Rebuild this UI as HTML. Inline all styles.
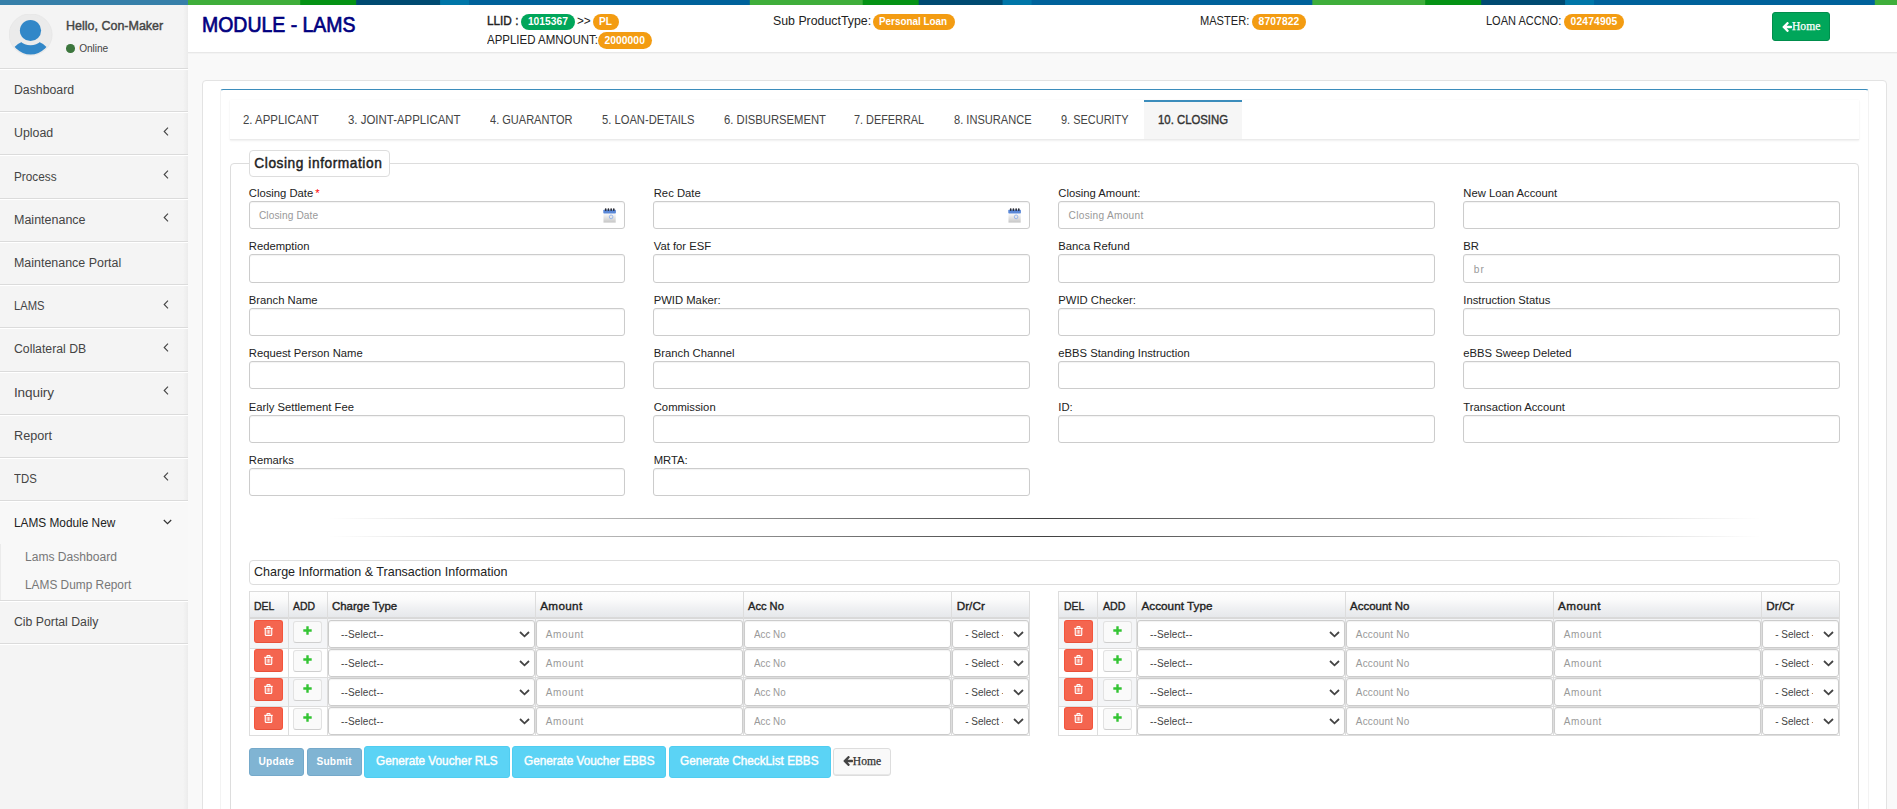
<!DOCTYPE html>
<html lang="en"><head><meta charset="utf-8"><title>MODULE - LAMS</title>
<style>
*{box-sizing:border-box;margin:0;padding:0}
html,body{width:1897px;height:809px;overflow:hidden;background:#f9f9f9;font-family:"Liberation Sans",sans-serif;color:#444}
div,span,aside,header,main,nav,section,ul,li,a,i,b,label,button,input,svg,table,fieldset,legend,hr{position:absolute;display:block}
button,input{font:inherit;outline:0;padding:0;margin:0;-webkit-appearance:none;appearance:none}
.t{white-space:nowrap;line-height:normal;color:#444;transform-origin:0 0}
b{font-weight:400}
a{color:inherit;text-decoration:none}
#stripe{left:0;top:0;width:1897px;height:5px;background:#367fa9}
#stripe i{left:188px;top:0;width:1709px;height:5px;background:linear-gradient(90deg,#3fae3b 0,#3fae3b 20%,#059214 20%,#059214 30%,#004a71 30%,#004a71 45%,#0076a8 45%,#0076a8 50%,#00629b 50%,#00629b 100%);background-size:562.5px 5px;background-position:-0.7px 0}
#side{left:0;top:5px;width:188px;height:804px;background:#f4f4f4}
#side .edge{left:183px;top:0;width:5px;height:804px;background:linear-gradient(90deg,rgba(0,0,0,0),rgba(0,0,0,.035))}
#side .sep{left:0;width:188px;height:2px;border-top:1px solid #dbdbdb;background:#fff}
#side .open{left:0;width:188px;background:#f8f8f8}
#top{left:188px;top:5px;width:1709px;height:47px;background:#fff;box-shadow:0 1px 0 #e8e8e8,0 2px 0 #f3f3f3}
.badge{border-radius:9px;background:#f39c12}
.badge.g{background:#00a65a}
.card{left:202px;top:80px;width:1685px;height:760px;background:#fff;border:1px solid #e3e3e3;border-radius:4px}
.boxp{left:220px;top:89px;width:1649px;height:760px;background:#fff;border-top:1px solid #3c8dbc;border-left:1px solid #f3f3f3;border-right:1px solid #f3f3f3;border-radius:3px 3px 0 0}
.tabs{left:230px;top:100px;width:1629px;height:40px;background:#fff;border-bottom:1px solid #ebebeb;box-shadow:0 1px 2px rgba(0,0,0,.06), 0 0 1px rgba(0,0,0,.06)}
.tabs .act{left:914px;top:0;width:98px;height:39px;background:#f6f6f6;border-top:2px solid #3c8dbc}
.fs{left:230px;top:163px;width:1629px;height:700px;border:1px solid #ddd;border-radius:4px}
.lg{left:249px;top:150px;width:141px;height:27px;background:#fff;border:1px solid #ddd;border-radius:4px}
.in{background:#fff;border:1px solid #ccc;border-radius:3px;box-shadow:inset 0 1px 1px rgba(0,0,0,.05)}
.hr{left:328px;width:1433px;height:1px;background:linear-gradient(90deg,rgba(0,0,0,0),rgba(0,0,0,.75),rgba(0,0,0,0))}
.ttl{left:249px;top:560px;width:1591px;height:25px;border:1px solid #ddd;border-radius:4px;background:#fff}
.tb{border:1px solid #ddd;background:#fff}
.th{background:linear-gradient(#fefefe 0,#fbfbfb 30%,#f0f1f3 62%,#e6e8eb 100%);border-bottom:2px solid #d9d9d9}
.vl{width:1px;background:#ddd}
.hl{height:1px;background:#ddd}
.odd{background:#f4f5f7}
.del{background:#f4654f;border:1px solid #f4543c;border-bottom-color:#e8513a;border-radius:3px}
.addb{background:#fafafa;border:1px solid #e2e2e2;border-bottom-color:#cfcfcf;border-radius:3px}
.btn{border-radius:3px}
.hs{-webkit-text-stroke:0.25px}
</style></head>
<body>
<div id="stripe"><i></i></div>
<aside id="side"><div class="edge"></div><svg style="left:9px;top:9px;width:44px;height:42px" viewBox="0 0 44 42"><defs><clipPath id="cp"><ellipse cx="21.6" cy="20.6" rx="20.4" ry="19.8"/></clipPath></defs><ellipse cx="21.6" cy="20.6" rx="21.5" ry="20.8" fill="#ebebeb" stroke="#e2e2e2" stroke-width="0.6"/><g clip-path="url(#cp)"><circle cx="21.5" cy="48" r="21.8" fill="#3187c8"/></g><circle cx="21.5" cy="16.5" r="14.7" fill="#ebebeb"/><circle cx="21.5" cy="16.5" r="10.6" fill="#3187c8"/></svg><span class="t" style="left:65.59px;top:13.00px;font-size:12.8px;transform:scaleX(0.9764);-webkit-text-stroke:0.41px;">Hello, Con-Maker</span><i style="left:66px;top:39px;width:8.6px;height:8.6px;border-radius:50%;background:#3c763d"></i><span class="t" style="left:79.19px;top:37.60px;font-size:10.152px;letter-spacing:-0.076px;">Online</span><div class="open" style="top:497px;height:98px"></div><div style="left:0;top:539px;width:1px;height:56px;background:#ebebeb"></div><div class="sep" style="top:63px"></div><div class="sep" style="top:106px"></div><div class="sep" style="top:149px"></div><div class="sep" style="top:193px"></div><div class="sep" style="top:236px"></div><div class="sep" style="top:279px"></div><div class="sep" style="top:322px"></div><div class="sep" style="top:366px"></div><div class="sep" style="top:409px"></div><div class="sep" style="top:452px"></div><div class="sep" style="top:495px"></div><div class="sep" style="top:595px"></div><div class="sep" style="top:638px"></div><a><span class="t" style="left:13.96px;top:77.10px;font-size:13.536px;transform:scaleX(0.9086);">Dashboard</span></a><a><span class="t" style="left:13.96px;top:120.30px;font-size:13.536px;transform:scaleX(0.9146);">Upload</span></a><svg style="left:163px;top:121.8px;width:6px;height:9px" viewBox="0 0 6 9"><path d="M5 0.7 L1.2 4.5 L5 8.3" fill="none" stroke="#444" stroke-width="1.1"/></svg><a><span class="t" style="left:13.96px;top:163.50px;font-size:13.536px;transform:scaleX(0.8721);">Process</span></a><svg style="left:163px;top:165px;width:6px;height:9px" viewBox="0 0 6 9"><path d="M5 0.7 L1.2 4.5 L5 8.3" fill="none" stroke="#444" stroke-width="1.1"/></svg><a><span class="t" style="left:13.96px;top:206.70px;font-size:13.536px;transform:scaleX(0.9248);">Maintenance</span></a><svg style="left:163px;top:208.2px;width:6px;height:9px" viewBox="0 0 6 9"><path d="M5 0.7 L1.2 4.5 L5 8.3" fill="none" stroke="#444" stroke-width="1.1"/></svg><a><span class="t" style="left:13.96px;top:249.90px;font-size:13.536px;transform:scaleX(0.9203);">Maintenance Portal</span></a><a><span class="t" style="left:13.96px;top:293.10px;font-size:13.536px;transform:scaleX(0.8308);">LAMS</span></a><svg style="left:163px;top:294.6px;width:6px;height:9px" viewBox="0 0 6 9"><path d="M5 0.7 L1.2 4.5 L5 8.3" fill="none" stroke="#444" stroke-width="1.1"/></svg><a><span class="t" style="left:13.96px;top:336.30px;font-size:13.536px;transform:scaleX(0.9065);">Collateral DB</span></a><svg style="left:163px;top:337.8px;width:6px;height:9px" viewBox="0 0 6 9"><path d="M5 0.7 L1.2 4.5 L5 8.3" fill="none" stroke="#444" stroke-width="1.1"/></svg><a><span class="t" style="left:13.96px;top:379.50px;font-size:13.536px;letter-spacing:-0.092px;">Inquiry</span></a><svg style="left:163px;top:381px;width:6px;height:9px" viewBox="0 0 6 9"><path d="M5 0.7 L1.2 4.5 L5 8.3" fill="none" stroke="#444" stroke-width="1.1"/></svg><a><span class="t" style="left:13.96px;top:422.70px;font-size:13.536px;transform:scaleX(0.9360);">Report</span></a><a><span class="t" style="left:13.96px;top:465.90px;font-size:13.536px;transform:scaleX(0.8423);">TDS</span></a><svg style="left:163px;top:467.4px;width:6px;height:9px" viewBox="0 0 6 9"><path d="M5 0.7 L1.2 4.5 L5 8.3" fill="none" stroke="#444" stroke-width="1.1"/></svg><a><span class="t" style="left:13.76px;top:510.20px;font-size:13.536px;transform:scaleX(0.8755);color:#222;">LAMS Module New</span></a><svg style="left:163px;top:513.6px;width:9px;height:6px" viewBox="0 0 9 6"><path d="M0.8 1 L4.5 4.7 L8.2 1" fill="none" stroke="#333" stroke-width="1.2"/></svg><a><span class="t" style="left:24.66px;top:544.00px;font-size:13.536px;transform:scaleX(0.8926);color:#777;">Lams Dashboard</span></a><a><span class="t" style="left:24.66px;top:571.70px;font-size:13.536px;transform:scaleX(0.8780);color:#777;">LAMS Dump Report</span></a><a><span class="t" style="left:13.76px;top:608.50px;font-size:13.536px;transform:scaleX(0.9070);">Cib Portal Daily</span></a></aside>
<header id="top"><span class="t" style="left:14.23px;top:6.85px;font-size:21.8px;transform:scaleX(0.8928);-webkit-text-stroke:0.70px;color:#000080;">MODULE - LAMS</span><span class="t" style="left:299.08px;top:7.80px;font-size:12.9px;transform:scaleX(0.9136);-webkit-text-stroke:0.41px;color:#222;">LLID :</span><span class="badge g" style="left:333px;top:9.3px;width:54px;height:15.5px"></span><span class="t" style="left:339.89px;top:11.00px;font-size:10.3px;letter-spacing:0.020px;font-weight:700;color:#fff;">1015367</span><span class="t" style="left:388.98px;top:7.80px;font-size:12.9px;transform:scaleX(0.9117);color:#222;">&gt;&gt;</span><span class="badge" style="left:404.8px;top:9.3px;width:26.2px;height:15.5px"></span><span class="t" style="left:411.29px;top:11.00px;font-size:10.3px;transform:scaleX(0.9812);font-weight:700;color:#fff;">PL</span><span class="t" style="left:299.08px;top:26.60px;font-size:12.9px;transform:scaleX(0.8908);color:#222;">APPLIED AMNOUNT:</span><span class="badge" style="left:410.1px;top:27.1px;width:53.9px;height:16.8px"></span><span class="t" style="left:416.49px;top:30.00px;font-size:10.3px;letter-spacing:0.051px;font-weight:700;color:#fff;">2000000</span><span class="t" style="left:584.68px;top:8.00px;font-size:12.9px;transform:scaleX(0.9575);color:#222;">Sub ProductType:</span><span class="badge" style="left:684.8px;top:9.3px;width:82.2px;height:15.5px"></span><span class="t" style="left:691.39px;top:11.00px;font-size:10.3px;transform:scaleX(0.9601);font-weight:700;color:#fff;">Personal Loan</span><span class="t" style="left:1012.48px;top:8.00px;font-size:12.9px;transform:scaleX(0.8592);color:#222;">MASTER:</span><span class="badge" style="left:1064px;top:9.3px;width:54px;height:15.5px"></span><span class="t" style="left:1070.59px;top:11.00px;font-size:10.3px;letter-spacing:0.112px;font-weight:700;color:#fff;">8707822</span><span class="t" style="left:1298.48px;top:8.00px;font-size:12.9px;transform:scaleX(0.8538);color:#222;">LOAN ACCNO:</span><span class="badge" style="left:1376px;top:9.3px;width:60px;height:15.5px"></span><span class="t" style="left:1382.59px;top:11.00px;font-size:10.3px;letter-spacing:0.133px;font-weight:700;color:#fff;">02474905</span><a class="btn" style="left:1584px;top:7px;width:58px;height:29px;background:#00a65a;border:1px solid #008d4c"><svg style="left:9.2px;top:8.7px;width:10px;height:10.6px" viewBox="0 0 1536 1632"><path fill="#fff" d="M1536 768v128q0 53-32.500 90.500t-84.500 37.500h-704l293 294q38 36 38 90t-38 90l-75 76q-37 37-90 37-52 0-91-37l-651-652q-37-37-37-90 0-52 37-91l651-650q38-38 91-38 52 0 90 38l75 74q38 38 38 91t-38 91l-293 293h704q52 0 84.500 37.500t32.500 90.500z" transform="translate(0,-60)"/></svg><span class="t hs" style="left:18.94px;top:7.00px;font-size:11.6px;font-family:'Liberation Serif', serif;letter-spacing:0.053px;color:#fff;">Home</span></a></header>
<div class="card"></div><div class="boxp"></div>
<nav class="tabs"><div class="act"></div><a><span class="t" style="left:13.18px;top:12.20px;font-size:12.9px;transform:scaleX(0.8870);">2. APPLICANT</span></a><a><span class="t" style="left:118.08px;top:12.20px;font-size:12.9px;transform:scaleX(0.8875);">3. JOINT-APPLICANT</span></a><a><span class="t" style="left:259.88px;top:12.20px;font-size:12.9px;transform:scaleX(0.8555);">4. GUARANTOR</span></a><a><span class="t" style="left:371.88px;top:12.20px;font-size:12.9px;transform:scaleX(0.8688);">5. LOAN-DETAILS</span></a><a><span class="t" style="left:493.78px;top:12.20px;font-size:12.9px;transform:scaleX(0.8730);">6. DISBURSEMENT</span></a><a><span class="t" style="left:624.48px;top:12.20px;font-size:12.9px;transform:scaleX(0.8426);">7. DEFERRAL</span></a><a><span class="t" style="left:723.88px;top:12.20px;font-size:12.9px;transform:scaleX(0.8600);">8. INSURANCE</span></a><a><span class="t" style="left:830.88px;top:12.20px;font-size:12.9px;transform:scaleX(0.8505);">9. SECURITY</span></a><a><span class="t" style="left:927.78px;top:12.00px;font-size:12.9px;transform:scaleX(0.8806);-webkit-text-stroke:0.41px;color:#333;">10. CLOSING</span></a></nav>
<div class="fs"></div><div class="lg"><span class="t" style="left:4.35px;top:4.80px;font-size:13.723999999999998px;letter-spacing:0.555px;-webkit-text-stroke:0.44px;color:#222;">Closing information</span></div>
<section><label><span class="t" style="left:248.85px;top:187.00px;font-size:11.25px;color:#222;">Closing Date</span></label><span class="t" style="left:315.35px;top:187.00px;font-size:11.25px;color:#f00;">*</span><div class="in" style="left:249px;top:201px;width:376px;height:28px"><span class="t" style="left:8.89px;top:8.00px;font-size:10.152px;letter-spacing:0.109px;color:#999;">Closing Date</span><svg style="left:353px;top:6.3px;width:13.2px;height:14.8px" viewBox="0 0 14 15" preserveAspectRatio="none"><defs><linearGradient id="cg0" x1="0" y1="0" x2="0" y2="1"><stop offset="0" stop-color="#fbfbfb"/><stop offset="1" stop-color="#c6c6c6"/></linearGradient></defs><rect x="0.5" y="5.5" width="13" height="9.3" fill="url(#cg0)"/><rect x="0.3" y="1.8" width="13.4" height="3.8" rx="0.8" fill="#5a88d8"/><g fill="#2b2b33"><rect x="2" y="0.2" width="1.7" height="2.8" rx="0.8"/><rect x="4.9" y="0.2" width="1.7" height="2.8" rx="0.8"/><rect x="7.8" y="0.2" width="1.7" height="2.8" rx="0.8"/><rect x="10.6" y="0.2" width="1.7" height="2.8" rx="0.8"/></g><circle cx="8.6" cy="9" r="1.9" fill="none" stroke="#8fb0ea" stroke-width="0.9"/></svg></div><label><span class="t" style="left:653.75px;top:187.00px;font-size:11.25px;color:#222;">Rec Date</span></label><div class="in" style="left:653px;top:201px;width:377px;height:28px"><svg style="left:354px;top:6.3px;width:13.2px;height:14.8px" viewBox="0 0 14 15" preserveAspectRatio="none"><defs><linearGradient id="cg1" x1="0" y1="0" x2="0" y2="1"><stop offset="0" stop-color="#fbfbfb"/><stop offset="1" stop-color="#c6c6c6"/></linearGradient></defs><rect x="0.5" y="5.5" width="13" height="9.3" fill="url(#cg1)"/><rect x="0.3" y="1.8" width="13.4" height="3.8" rx="0.8" fill="#5a88d8"/><g fill="#2b2b33"><rect x="2" y="0.2" width="1.7" height="2.8" rx="0.8"/><rect x="4.9" y="0.2" width="1.7" height="2.8" rx="0.8"/><rect x="7.8" y="0.2" width="1.7" height="2.8" rx="0.8"/><rect x="10.6" y="0.2" width="1.7" height="2.8" rx="0.8"/></g><circle cx="8.6" cy="9" r="1.9" fill="none" stroke="#8fb0ea" stroke-width="0.9"/></svg></div><label><span class="t" style="left:1058.35px;top:187.00px;font-size:11.25px;color:#222;">Closing Amount:</span></label><div class="in" style="left:1058px;top:201px;width:377px;height:28px"><span class="t" style="left:9.59px;top:8.00px;font-size:10.152px;letter-spacing:0.280px;color:#999;">Closing Amount</span></div><label><span class="t" style="left:1463.35px;top:187.00px;font-size:11.25px;color:#222;">New Loan Account</span></label><input class="in" type="text" style="left:1463px;top:201px;width:377px;height:28px"><label><span class="t" style="left:248.85px;top:240.00px;font-size:11.25px;color:#222;">Redemption</span></label><input class="in" type="text" style="left:249px;top:254px;width:376px;height:29px"><label><span class="t" style="left:653.75px;top:240.00px;font-size:11.25px;color:#222;">Vat for ESF</span></label><input class="in" type="text" style="left:653px;top:254px;width:377px;height:29px"><label><span class="t" style="left:1058.35px;top:240.00px;font-size:11.25px;color:#222;">Banca Refund</span></label><input class="in" type="text" style="left:1058px;top:254px;width:377px;height:29px"><label><span class="t" style="left:1463.35px;top:240.00px;font-size:11.25px;color:#222;">BR</span></label><div class="in" style="left:1463px;top:254px;width:377px;height:29px"><span class="t" style="left:9.79px;top:8.70px;font-size:10.152px;letter-spacing:1.187px;color:#999;">br</span></div><label><span class="t" style="left:248.85px;top:294.00px;font-size:11.25px;color:#222;">Branch Name</span></label><input class="in" type="text" style="left:249px;top:308px;width:376px;height:28px"><label><span class="t" style="left:653.75px;top:294.00px;font-size:11.25px;color:#222;">PWID Maker:</span></label><input class="in" type="text" style="left:653px;top:308px;width:377px;height:28px"><label><span class="t" style="left:1058.35px;top:294.00px;font-size:11.25px;color:#222;">PWID Checker:</span></label><input class="in" type="text" style="left:1058px;top:308px;width:377px;height:28px"><label><span class="t" style="left:1463.35px;top:294.00px;font-size:11.25px;color:#222;">Instruction Status</span></label><input class="in" type="text" style="left:1463px;top:308px;width:377px;height:28px"><label><span class="t" style="left:248.85px;top:347.00px;font-size:11.25px;color:#222;">Request Person Name</span></label><input class="in" type="text" style="left:249px;top:361px;width:376px;height:28px"><label><span class="t" style="left:653.75px;top:347.00px;font-size:11.25px;color:#222;">Branch Channel</span></label><input class="in" type="text" style="left:653px;top:361px;width:377px;height:28px"><label><span class="t" style="left:1058.35px;top:347.00px;font-size:11.25px;color:#222;">eBBS Standing Instruction</span></label><input class="in" type="text" style="left:1058px;top:361px;width:377px;height:28px"><label><span class="t" style="left:1463.35px;top:347.00px;font-size:11.25px;color:#222;">eBBS Sweep Deleted</span></label><input class="in" type="text" style="left:1463px;top:361px;width:377px;height:28px"><label><span class="t" style="left:248.85px;top:401.00px;font-size:11.25px;color:#222;">Early Settlement Fee</span></label><input class="in" type="text" style="left:249px;top:415px;width:376px;height:28px"><label><span class="t" style="left:653.75px;top:401.00px;font-size:11.25px;color:#222;">Commission</span></label><input class="in" type="text" style="left:653px;top:415px;width:377px;height:28px"><label><span class="t" style="left:1058.35px;top:401.00px;font-size:11.25px;color:#222;">ID:</span></label><input class="in" type="text" style="left:1058px;top:415px;width:377px;height:28px"><label><span class="t" style="left:1463.35px;top:401.00px;font-size:11.25px;color:#222;">Transaction Account</span></label><input class="in" type="text" style="left:1463px;top:415px;width:377px;height:28px"><label><span class="t" style="left:248.85px;top:454.00px;font-size:11.25px;color:#222;">Remarks</span></label><input class="in" type="text" style="left:249px;top:468px;width:376px;height:28px"><label><span class="t" style="left:653.75px;top:454.00px;font-size:11.25px;color:#222;">MRTA:</span></label><input class="in" type="text" style="left:653px;top:468px;width:377px;height:28px"></section>
<div class="hr" style="top:518px"></div><div class="hr" style="top:536px"></div>
<div class="ttl"><span class="t" style="left:4.08px;top:3.00px;font-size:12.9px;transform:scaleX(0.9717);color:#222;">Charge Information &amp; Transaction Information</span></div>
<div class="tb" style="left:249px;top:591px;width:781px;height:145px"><div class="th" style="left:0;top:0;width:779px;height:27px"></div><div class="odd" style="left:0;top:27px;width:779px;height:29px"></div><div class="odd" style="left:0;top:86px;width:779px;height:28px"></div><div class="hl" style="left:0;top:56px;width:779px"></div><div class="hl" style="left:0;top:85px;width:779px"></div><div class="hl" style="left:0;top:114px;width:779px"></div><div class="vl" style="left:38px;top:0;height:143px"></div><div class="vl" style="left:77px;top:0;height:143px"></div><div class="vl" style="left:285px;top:0;height:143px"></div><div class="vl" style="left:493px;top:0;height:143px"></div><div class="vl" style="left:701px;top:0;height:143px"></div><b><span class="t" style="left:4.23px;top:7.00px;font-size:11.7px;transform:scaleX(0.8939);-webkit-text-stroke:0.37px;color:#222;">DEL</span></b><b><span class="t" style="left:43.23px;top:7.00px;font-size:11.7px;transform:scaleX(0.8926);-webkit-text-stroke:0.37px;color:#222;">ADD</span></b><b><span class="t" style="left:82.23px;top:7.00px;font-size:11.7px;transform:scaleX(0.9778);-webkit-text-stroke:0.37px;color:#222;">Charge Type</span></b><b><span class="t" style="left:290.23px;top:7.00px;font-size:11.7px;letter-spacing:0.337px;-webkit-text-stroke:0.37px;color:#222;">Amount</span></b><b><span class="t" style="left:498.43px;top:7.00px;font-size:11.7px;transform:scaleX(0.9513);-webkit-text-stroke:0.37px;color:#222;">Acc No</span></b><b><span class="t" style="left:706.63px;top:7.00px;font-size:11.7px;letter-spacing:0.070px;-webkit-text-stroke:0.37px;color:#222;">Dr/Cr</span></b><div class="del" style="left:4px;top:28px;width:29px;height:23px"><svg style="left:9.2px;top:5px;width:9px;height:10px" viewBox="0 0 10 11"><g fill="none" stroke="#fff" stroke-width="1.25"><path d="M0.3 2.6 H9.7"/><path d="M3.3 2.4 V1.1 Q3.3 0.6 3.8 0.6 H6.2 Q6.7 0.6 6.7 1.1 V2.4"/><path d="M1.4 2.8 V9.3 Q1.4 10.4 2.5 10.4 H7.5 Q8.6 10.4 8.6 9.3 V2.8"/></g><g stroke="#ffe9e4" stroke-width="1"><path d="M3.5 4.2 V8.6"/><path d="M5 4.2 V8.6"/><path d="M6.5 4.2 V8.6"/></g></svg></div><div class="addb" style="left:43px;top:29px;width:29px;height:22px"><svg style="left:8.8px;top:3.6px;width:9px;height:9px" viewBox="0 0 9 9"><path d="M3.3 0.3 H5.7 V3.3 H8.7 V5.7 H5.7 V8.7 H3.3 V5.7 H0.3 V3.3 H3.3 Z" fill="#33c433"/></svg></div><div class="in" style="left:78px;top:28px;width:207px;height:28px"><span class="t" style="left:12.00px;top:8.20px;font-size:10.0px;letter-spacing:0.134px;">--Select--</span><svg style="left:189.8px;top:10.3px;width:11px;height:7px" viewBox="0 0 11 7"><path d="M1 1 L5.5 5.3 L10 1" fill="none" stroke="#444" stroke-width="1.8"/></svg></div><div class="in" style="left:286px;top:28px;width:207px;height:28px"><span class="t" style="left:8.80px;top:8.20px;font-size:10.0px;letter-spacing:0.624px;color:#999;">Amount</span></div><div class="in" style="left:494px;top:28px;width:207px;height:28px"><span class="t" style="left:8.80px;top:8.20px;font-size:10.0px;transform:scaleX(0.9803);color:#999;">Acc No</span></div><div class="in" style="left:702px;top:28px;width:77px;height:28px"><div style="left:0;top:0;width:50px;height:25px;overflow:hidden"><span class="t" style="left:12.20px;top:8.20px;font-size:10.0px;">- Select -</span></div><svg style="left:59.8px;top:10.3px;width:11px;height:7px" viewBox="0 0 11 7"><path d="M1 1 L5.5 5.3 L10 1" fill="none" stroke="#444" stroke-width="1.8"/></svg></div><div class="del" style="left:4px;top:57px;width:29px;height:23px"><svg style="left:9.2px;top:5px;width:9px;height:10px" viewBox="0 0 10 11"><g fill="none" stroke="#fff" stroke-width="1.25"><path d="M0.3 2.6 H9.7"/><path d="M3.3 2.4 V1.1 Q3.3 0.6 3.8 0.6 H6.2 Q6.7 0.6 6.7 1.1 V2.4"/><path d="M1.4 2.8 V9.3 Q1.4 10.4 2.5 10.4 H7.5 Q8.6 10.4 8.6 9.3 V2.8"/></g><g stroke="#ffe9e4" stroke-width="1"><path d="M3.5 4.2 V8.6"/><path d="M5 4.2 V8.6"/><path d="M6.5 4.2 V8.6"/></g></svg></div><div class="addb" style="left:43px;top:58px;width:29px;height:22px"><svg style="left:8.8px;top:3.6px;width:9px;height:9px" viewBox="0 0 9 9"><path d="M3.3 0.3 H5.7 V3.3 H8.7 V5.7 H5.7 V8.7 H3.3 V5.7 H0.3 V3.3 H3.3 Z" fill="#33c433"/></svg></div><div class="in" style="left:78px;top:57px;width:207px;height:28px"><span class="t" style="left:12.00px;top:8.20px;font-size:10.0px;letter-spacing:0.134px;">--Select--</span><svg style="left:189.8px;top:10.3px;width:11px;height:7px" viewBox="0 0 11 7"><path d="M1 1 L5.5 5.3 L10 1" fill="none" stroke="#444" stroke-width="1.8"/></svg></div><div class="in" style="left:286px;top:57px;width:207px;height:28px"><span class="t" style="left:8.80px;top:8.20px;font-size:10.0px;letter-spacing:0.624px;color:#999;">Amount</span></div><div class="in" style="left:494px;top:57px;width:207px;height:28px"><span class="t" style="left:8.80px;top:8.20px;font-size:10.0px;transform:scaleX(0.9803);color:#999;">Acc No</span></div><div class="in" style="left:702px;top:57px;width:77px;height:28px"><div style="left:0;top:0;width:50px;height:25px;overflow:hidden"><span class="t" style="left:12.20px;top:8.20px;font-size:10.0px;">- Select -</span></div><svg style="left:59.8px;top:10.3px;width:11px;height:7px" viewBox="0 0 11 7"><path d="M1 1 L5.5 5.3 L10 1" fill="none" stroke="#444" stroke-width="1.8"/></svg></div><div class="del" style="left:4px;top:86px;width:29px;height:23px"><svg style="left:9.2px;top:5px;width:9px;height:10px" viewBox="0 0 10 11"><g fill="none" stroke="#fff" stroke-width="1.25"><path d="M0.3 2.6 H9.7"/><path d="M3.3 2.4 V1.1 Q3.3 0.6 3.8 0.6 H6.2 Q6.7 0.6 6.7 1.1 V2.4"/><path d="M1.4 2.8 V9.3 Q1.4 10.4 2.5 10.4 H7.5 Q8.6 10.4 8.6 9.3 V2.8"/></g><g stroke="#ffe9e4" stroke-width="1"><path d="M3.5 4.2 V8.6"/><path d="M5 4.2 V8.6"/><path d="M6.5 4.2 V8.6"/></g></svg></div><div class="addb" style="left:43px;top:87px;width:29px;height:22px"><svg style="left:8.8px;top:3.6px;width:9px;height:9px" viewBox="0 0 9 9"><path d="M3.3 0.3 H5.7 V3.3 H8.7 V5.7 H5.7 V8.7 H3.3 V5.7 H0.3 V3.3 H3.3 Z" fill="#33c433"/></svg></div><div class="in" style="left:78px;top:86px;width:207px;height:28px"><span class="t" style="left:12.00px;top:8.20px;font-size:10.0px;letter-spacing:0.134px;">--Select--</span><svg style="left:189.8px;top:10.3px;width:11px;height:7px" viewBox="0 0 11 7"><path d="M1 1 L5.5 5.3 L10 1" fill="none" stroke="#444" stroke-width="1.8"/></svg></div><div class="in" style="left:286px;top:86px;width:207px;height:28px"><span class="t" style="left:8.80px;top:8.20px;font-size:10.0px;letter-spacing:0.624px;color:#999;">Amount</span></div><div class="in" style="left:494px;top:86px;width:207px;height:28px"><span class="t" style="left:8.80px;top:8.20px;font-size:10.0px;transform:scaleX(0.9803);color:#999;">Acc No</span></div><div class="in" style="left:702px;top:86px;width:77px;height:28px"><div style="left:0;top:0;width:50px;height:25px;overflow:hidden"><span class="t" style="left:12.20px;top:8.20px;font-size:10.0px;">- Select -</span></div><svg style="left:59.8px;top:10.3px;width:11px;height:7px" viewBox="0 0 11 7"><path d="M1 1 L5.5 5.3 L10 1" fill="none" stroke="#444" stroke-width="1.8"/></svg></div><div class="del" style="left:4px;top:115px;width:29px;height:23px"><svg style="left:9.2px;top:5px;width:9px;height:10px" viewBox="0 0 10 11"><g fill="none" stroke="#fff" stroke-width="1.25"><path d="M0.3 2.6 H9.7"/><path d="M3.3 2.4 V1.1 Q3.3 0.6 3.8 0.6 H6.2 Q6.7 0.6 6.7 1.1 V2.4"/><path d="M1.4 2.8 V9.3 Q1.4 10.4 2.5 10.4 H7.5 Q8.6 10.4 8.6 9.3 V2.8"/></g><g stroke="#ffe9e4" stroke-width="1"><path d="M3.5 4.2 V8.6"/><path d="M5 4.2 V8.6"/><path d="M6.5 4.2 V8.6"/></g></svg></div><div class="addb" style="left:43px;top:116px;width:29px;height:22px"><svg style="left:8.8px;top:3.6px;width:9px;height:9px" viewBox="0 0 9 9"><path d="M3.3 0.3 H5.7 V3.3 H8.7 V5.7 H5.7 V8.7 H3.3 V5.7 H0.3 V3.3 H3.3 Z" fill="#33c433"/></svg></div><div class="in" style="left:78px;top:115px;width:207px;height:28px"><span class="t" style="left:12.00px;top:8.20px;font-size:10.0px;letter-spacing:0.134px;">--Select--</span><svg style="left:189.8px;top:10.3px;width:11px;height:7px" viewBox="0 0 11 7"><path d="M1 1 L5.5 5.3 L10 1" fill="none" stroke="#444" stroke-width="1.8"/></svg></div><div class="in" style="left:286px;top:115px;width:207px;height:28px"><span class="t" style="left:8.80px;top:8.20px;font-size:10.0px;letter-spacing:0.624px;color:#999;">Amount</span></div><div class="in" style="left:494px;top:115px;width:207px;height:28px"><span class="t" style="left:8.80px;top:8.20px;font-size:10.0px;transform:scaleX(0.9803);color:#999;">Acc No</span></div><div class="in" style="left:702px;top:115px;width:77px;height:28px"><div style="left:0;top:0;width:50px;height:25px;overflow:hidden"><span class="t" style="left:12.20px;top:8.20px;font-size:10.0px;">- Select -</span></div><svg style="left:59.8px;top:10.3px;width:11px;height:7px" viewBox="0 0 11 7"><path d="M1 1 L5.5 5.3 L10 1" fill="none" stroke="#444" stroke-width="1.8"/></svg></div></div>
<div class="tb" style="left:1058px;top:591px;width:782px;height:145px"><div class="th" style="left:0;top:0;width:780px;height:27px"></div><div class="odd" style="left:0;top:27px;width:780px;height:29px"></div><div class="odd" style="left:0;top:86px;width:780px;height:28px"></div><div class="hl" style="left:0;top:56px;width:780px"></div><div class="hl" style="left:0;top:85px;width:780px"></div><div class="hl" style="left:0;top:114px;width:780px"></div><div class="vl" style="left:38px;top:0;height:143px"></div><div class="vl" style="left:77px;top:0;height:143px"></div><div class="vl" style="left:286px;top:0;height:143px"></div><div class="vl" style="left:494px;top:0;height:143px"></div><div class="vl" style="left:702px;top:0;height:143px"></div><b><span class="t" style="left:5.03px;top:7.00px;font-size:11.7px;transform:scaleX(0.8939);-webkit-text-stroke:0.37px;color:#222;">DEL</span></b><b><span class="t" style="left:43.53px;top:7.00px;font-size:11.7px;transform:scaleX(0.9129);-webkit-text-stroke:0.37px;color:#222;">ADD</span></b><b><span class="t" style="left:82.43px;top:7.00px;font-size:11.7px;letter-spacing:0.046px;-webkit-text-stroke:0.37px;color:#222;">Account Type</span></b><b><span class="t" style="left:291.33px;top:7.00px;font-size:11.7px;transform:scaleX(0.9820);-webkit-text-stroke:0.37px;color:#222;">Account No</span></b><b><span class="t" style="left:499.03px;top:7.00px;font-size:11.7px;letter-spacing:0.428px;-webkit-text-stroke:0.37px;color:#222;">Amount</span></b><b><span class="t" style="left:707.33px;top:7.00px;font-size:11.7px;-webkit-text-stroke:0.37px;color:#222;">Dr/Cr</span></b><div class="del" style="left:5px;top:28px;width:29px;height:23px"><svg style="left:9.2px;top:5px;width:9px;height:10px" viewBox="0 0 10 11"><g fill="none" stroke="#fff" stroke-width="1.25"><path d="M0.3 2.6 H9.7"/><path d="M3.3 2.4 V1.1 Q3.3 0.6 3.8 0.6 H6.2 Q6.7 0.6 6.7 1.1 V2.4"/><path d="M1.4 2.8 V9.3 Q1.4 10.4 2.5 10.4 H7.5 Q8.6 10.4 8.6 9.3 V2.8"/></g><g stroke="#ffe9e4" stroke-width="1"><path d="M3.5 4.2 V8.6"/><path d="M5 4.2 V8.6"/><path d="M6.5 4.2 V8.6"/></g></svg></div><div class="addb" style="left:44px;top:29px;width:29px;height:22px"><svg style="left:8.8px;top:3.6px;width:9px;height:9px" viewBox="0 0 9 9"><path d="M3.3 0.3 H5.7 V3.3 H8.7 V5.7 H5.7 V8.7 H3.3 V5.7 H0.3 V3.3 H3.3 Z" fill="#33c433"/></svg></div><div class="in" style="left:78px;top:28px;width:208px;height:28px"><span class="t" style="left:12.00px;top:8.20px;font-size:10.0px;letter-spacing:0.134px;">--Select--</span><svg style="left:190.8px;top:10.3px;width:11px;height:7px" viewBox="0 0 11 7"><path d="M1 1 L5.5 5.3 L10 1" fill="none" stroke="#444" stroke-width="1.8"/></svg></div><div class="in" style="left:287px;top:28px;width:207px;height:28px"><span class="t" style="left:8.80px;top:8.20px;font-size:10.0px;letter-spacing:0.189px;color:#999;">Account No</span></div><div class="in" style="left:495px;top:28px;width:207px;height:28px"><span class="t" style="left:8.80px;top:8.20px;font-size:10.0px;letter-spacing:0.624px;color:#999;">Amount</span></div><div class="in" style="left:703px;top:28px;width:77px;height:28px"><div style="left:0;top:0;width:50px;height:25px;overflow:hidden"><span class="t" style="left:12.20px;top:8.20px;font-size:10.0px;">- Select -</span></div><svg style="left:59.8px;top:10.3px;width:11px;height:7px" viewBox="0 0 11 7"><path d="M1 1 L5.5 5.3 L10 1" fill="none" stroke="#444" stroke-width="1.8"/></svg></div><div class="del" style="left:5px;top:57px;width:29px;height:23px"><svg style="left:9.2px;top:5px;width:9px;height:10px" viewBox="0 0 10 11"><g fill="none" stroke="#fff" stroke-width="1.25"><path d="M0.3 2.6 H9.7"/><path d="M3.3 2.4 V1.1 Q3.3 0.6 3.8 0.6 H6.2 Q6.7 0.6 6.7 1.1 V2.4"/><path d="M1.4 2.8 V9.3 Q1.4 10.4 2.5 10.4 H7.5 Q8.6 10.4 8.6 9.3 V2.8"/></g><g stroke="#ffe9e4" stroke-width="1"><path d="M3.5 4.2 V8.6"/><path d="M5 4.2 V8.6"/><path d="M6.5 4.2 V8.6"/></g></svg></div><div class="addb" style="left:44px;top:58px;width:29px;height:22px"><svg style="left:8.8px;top:3.6px;width:9px;height:9px" viewBox="0 0 9 9"><path d="M3.3 0.3 H5.7 V3.3 H8.7 V5.7 H5.7 V8.7 H3.3 V5.7 H0.3 V3.3 H3.3 Z" fill="#33c433"/></svg></div><div class="in" style="left:78px;top:57px;width:208px;height:28px"><span class="t" style="left:12.00px;top:8.20px;font-size:10.0px;letter-spacing:0.134px;">--Select--</span><svg style="left:190.8px;top:10.3px;width:11px;height:7px" viewBox="0 0 11 7"><path d="M1 1 L5.5 5.3 L10 1" fill="none" stroke="#444" stroke-width="1.8"/></svg></div><div class="in" style="left:287px;top:57px;width:207px;height:28px"><span class="t" style="left:8.80px;top:8.20px;font-size:10.0px;letter-spacing:0.189px;color:#999;">Account No</span></div><div class="in" style="left:495px;top:57px;width:207px;height:28px"><span class="t" style="left:8.80px;top:8.20px;font-size:10.0px;letter-spacing:0.624px;color:#999;">Amount</span></div><div class="in" style="left:703px;top:57px;width:77px;height:28px"><div style="left:0;top:0;width:50px;height:25px;overflow:hidden"><span class="t" style="left:12.20px;top:8.20px;font-size:10.0px;">- Select -</span></div><svg style="left:59.8px;top:10.3px;width:11px;height:7px" viewBox="0 0 11 7"><path d="M1 1 L5.5 5.3 L10 1" fill="none" stroke="#444" stroke-width="1.8"/></svg></div><div class="del" style="left:5px;top:86px;width:29px;height:23px"><svg style="left:9.2px;top:5px;width:9px;height:10px" viewBox="0 0 10 11"><g fill="none" stroke="#fff" stroke-width="1.25"><path d="M0.3 2.6 H9.7"/><path d="M3.3 2.4 V1.1 Q3.3 0.6 3.8 0.6 H6.2 Q6.7 0.6 6.7 1.1 V2.4"/><path d="M1.4 2.8 V9.3 Q1.4 10.4 2.5 10.4 H7.5 Q8.6 10.4 8.6 9.3 V2.8"/></g><g stroke="#ffe9e4" stroke-width="1"><path d="M3.5 4.2 V8.6"/><path d="M5 4.2 V8.6"/><path d="M6.5 4.2 V8.6"/></g></svg></div><div class="addb" style="left:44px;top:87px;width:29px;height:22px"><svg style="left:8.8px;top:3.6px;width:9px;height:9px" viewBox="0 0 9 9"><path d="M3.3 0.3 H5.7 V3.3 H8.7 V5.7 H5.7 V8.7 H3.3 V5.7 H0.3 V3.3 H3.3 Z" fill="#33c433"/></svg></div><div class="in" style="left:78px;top:86px;width:208px;height:28px"><span class="t" style="left:12.00px;top:8.20px;font-size:10.0px;letter-spacing:0.134px;">--Select--</span><svg style="left:190.8px;top:10.3px;width:11px;height:7px" viewBox="0 0 11 7"><path d="M1 1 L5.5 5.3 L10 1" fill="none" stroke="#444" stroke-width="1.8"/></svg></div><div class="in" style="left:287px;top:86px;width:207px;height:28px"><span class="t" style="left:8.80px;top:8.20px;font-size:10.0px;letter-spacing:0.189px;color:#999;">Account No</span></div><div class="in" style="left:495px;top:86px;width:207px;height:28px"><span class="t" style="left:8.80px;top:8.20px;font-size:10.0px;letter-spacing:0.624px;color:#999;">Amount</span></div><div class="in" style="left:703px;top:86px;width:77px;height:28px"><div style="left:0;top:0;width:50px;height:25px;overflow:hidden"><span class="t" style="left:12.20px;top:8.20px;font-size:10.0px;">- Select -</span></div><svg style="left:59.8px;top:10.3px;width:11px;height:7px" viewBox="0 0 11 7"><path d="M1 1 L5.5 5.3 L10 1" fill="none" stroke="#444" stroke-width="1.8"/></svg></div><div class="del" style="left:5px;top:115px;width:29px;height:23px"><svg style="left:9.2px;top:5px;width:9px;height:10px" viewBox="0 0 10 11"><g fill="none" stroke="#fff" stroke-width="1.25"><path d="M0.3 2.6 H9.7"/><path d="M3.3 2.4 V1.1 Q3.3 0.6 3.8 0.6 H6.2 Q6.7 0.6 6.7 1.1 V2.4"/><path d="M1.4 2.8 V9.3 Q1.4 10.4 2.5 10.4 H7.5 Q8.6 10.4 8.6 9.3 V2.8"/></g><g stroke="#ffe9e4" stroke-width="1"><path d="M3.5 4.2 V8.6"/><path d="M5 4.2 V8.6"/><path d="M6.5 4.2 V8.6"/></g></svg></div><div class="addb" style="left:44px;top:116px;width:29px;height:22px"><svg style="left:8.8px;top:3.6px;width:9px;height:9px" viewBox="0 0 9 9"><path d="M3.3 0.3 H5.7 V3.3 H8.7 V5.7 H5.7 V8.7 H3.3 V5.7 H0.3 V3.3 H3.3 Z" fill="#33c433"/></svg></div><div class="in" style="left:78px;top:115px;width:208px;height:28px"><span class="t" style="left:12.00px;top:8.20px;font-size:10.0px;letter-spacing:0.134px;">--Select--</span><svg style="left:190.8px;top:10.3px;width:11px;height:7px" viewBox="0 0 11 7"><path d="M1 1 L5.5 5.3 L10 1" fill="none" stroke="#444" stroke-width="1.8"/></svg></div><div class="in" style="left:287px;top:115px;width:207px;height:28px"><span class="t" style="left:8.80px;top:8.20px;font-size:10.0px;letter-spacing:0.189px;color:#999;">Account No</span></div><div class="in" style="left:495px;top:115px;width:207px;height:28px"><span class="t" style="left:8.80px;top:8.20px;font-size:10.0px;letter-spacing:0.624px;color:#999;">Amount</span></div><div class="in" style="left:703px;top:115px;width:77px;height:28px"><div style="left:0;top:0;width:50px;height:25px;overflow:hidden"><span class="t" style="left:12.20px;top:8.20px;font-size:10.0px;">- Select -</span></div><svg style="left:59.8px;top:10.3px;width:11px;height:7px" viewBox="0 0 11 7"><path d="M1 1 L5.5 5.3 L10 1" fill="none" stroke="#444" stroke-width="1.8"/></svg></div></div>
<div style="left:0;top:0"><button type="button" class="btn" style="left:249px;top:748px;width:55px;height:28px;background:#80b4d3;border:1px solid #75a9ca"><span class="t" style="left:8.59px;top:7.20px;font-size:10.152px;letter-spacing:0.207px;font-weight:700;color:#fff;">Update</span></button><button type="button" class="btn" style="left:307px;top:748px;width:55px;height:28px;background:#80b4d3;border:1px solid #75a9ca"><span class="t" style="left:8.59px;top:7.20px;font-size:10.152px;letter-spacing:0.134px;font-weight:700;color:#fff;">Submit</span></button><button type="button" class="btn" style="left:364px;top:746px;width:146px;height:32px;background:#5bd3f5;border:1px solid #50cdf1"><span class="t" style="left:10.89px;top:6.90px;font-size:12.69px;transform:scaleX(0.9278);-webkit-text-stroke:0.41px;color:#fff;">Generate Voucher RLS</span></button><button type="button" class="btn" style="left:512px;top:746px;width:154px;height:32px;background:#5bd3f5;border:1px solid #50cdf1"><span class="t" style="left:10.99px;top:6.90px;font-size:12.69px;transform:scaleX(0.9299);-webkit-text-stroke:0.41px;color:#fff;">Generate Voucher EBBS</span></button><button type="button" class="btn" style="left:669px;top:746px;width:162px;height:32px;background:#5bd3f5;border:1px solid #50cdf1"><span class="t" style="left:10.49px;top:6.90px;font-size:12.69px;transform:scaleX(0.9264);-webkit-text-stroke:0.41px;color:#fff;">Generate CheckList EBBS</span></button><a class="btn" style="left:833px;top:748px;width:58px;height:28px;background:#f9f9f9;border:1px solid #ddd;box-shadow:inset 0 -1px 0 rgba(0,0,0,.07)"><svg style="left:8.9px;top:6.9px;width:10px;height:10.6px" viewBox="0 0 1536 1632"><path fill="#444" d="M1536 768v128q0 53-32.500 90.500t-84.500 37.500h-704l293 294q38 36 38 90t-38 90l-75 76q-37 37-90 37-52 0-91-37l-651-652q-37-37-37-90 0-52 37-91l651-650q38-38 91-38 52 0 90 38l75 74q38 38 38 91t-38 91l-293 293h704q52 0 84.500 37.500t32.500 90.500z" transform="translate(0,-60)"/></svg><span class="t hs" style="left:18.74px;top:5.90px;font-size:11.6px;font-family:'Liberation Serif', serif;letter-spacing:0.053px;color:#333;">Home</span></a></div>
</body></html>
